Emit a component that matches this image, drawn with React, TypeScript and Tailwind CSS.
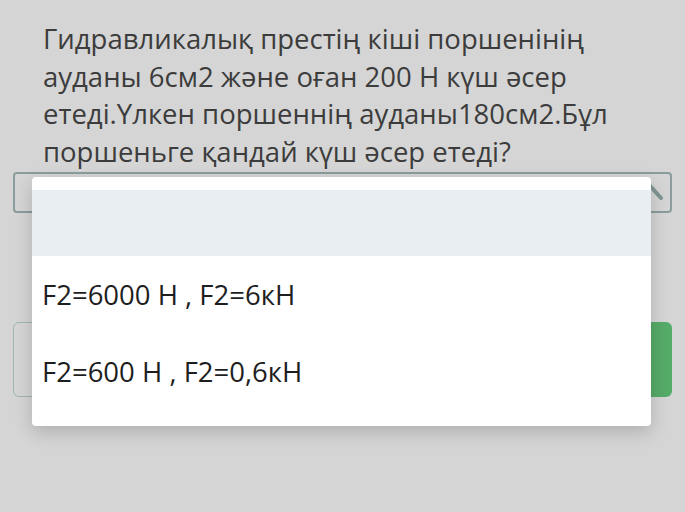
import React from "react";

const options = ["F2=6000 H , F2=6кН", "F2=600 H , F2=0,6кН"];

export default function App() {
  return (
    <div className="min-h-[512px] w-full bg-[#d5d5d5] font-['Open_Sans',sans-serif]">
      <div className="px-[13px] pt-[20px]">
        <p className="mb-[2px] px-[30px] text-[27.5px] leading-[37.5px] text-[#3c3c3c]">
          Гидравликалық престің кіші поршенінің
          <br />
          ауданы 6см2 және оған 200 Н күш әсер
          <br />
          етеді.Үлкен поршеннің ауданы180см2.Бұл
          <br />
          поршеньге қандай күш әсер етеді?
        </p>

        <div className="relative">
          <div className="flex h-[41px] items-center justify-end rounded-[4px] border-2 border-[#8a9d9c] pr-[6px]">
            <svg width="26" height="26" viewBox="0 0 26 26" fill="none">
              <path d="M3 18 L13 7 L23 18" stroke="#7f9493" strokeWidth="4" strokeLinecap="round" />
            </svg>
          </div>

          <div className="absolute left-[19px] top-[5px] z-10 w-[619px] rounded-[4px] bg-white pb-[16px] pt-[13px] shadow-[0_6px_18px_rgba(0,0,0,0.18)]">
            <div className="h-[66px] bg-[#e8eef1]" />
            <div>
              {options.map((o) => (
                <div key={o} className="flex h-[77px] items-center px-[10px] text-[27.5px] text-[#1e1e1e]">
                  {o}
                </div>
              ))}
            </div>
          </div>
        </div>

        <div className="mt-[109px] flex justify-between">
          <button className="h-[75px] w-[160px] rounded-[6px] border border-[#9fb5b5]" />
          <button className="h-[75px] w-[160px] rounded-[6px] bg-[#55ab68]" />
        </div>
      </div>
    </div>
  );
}
